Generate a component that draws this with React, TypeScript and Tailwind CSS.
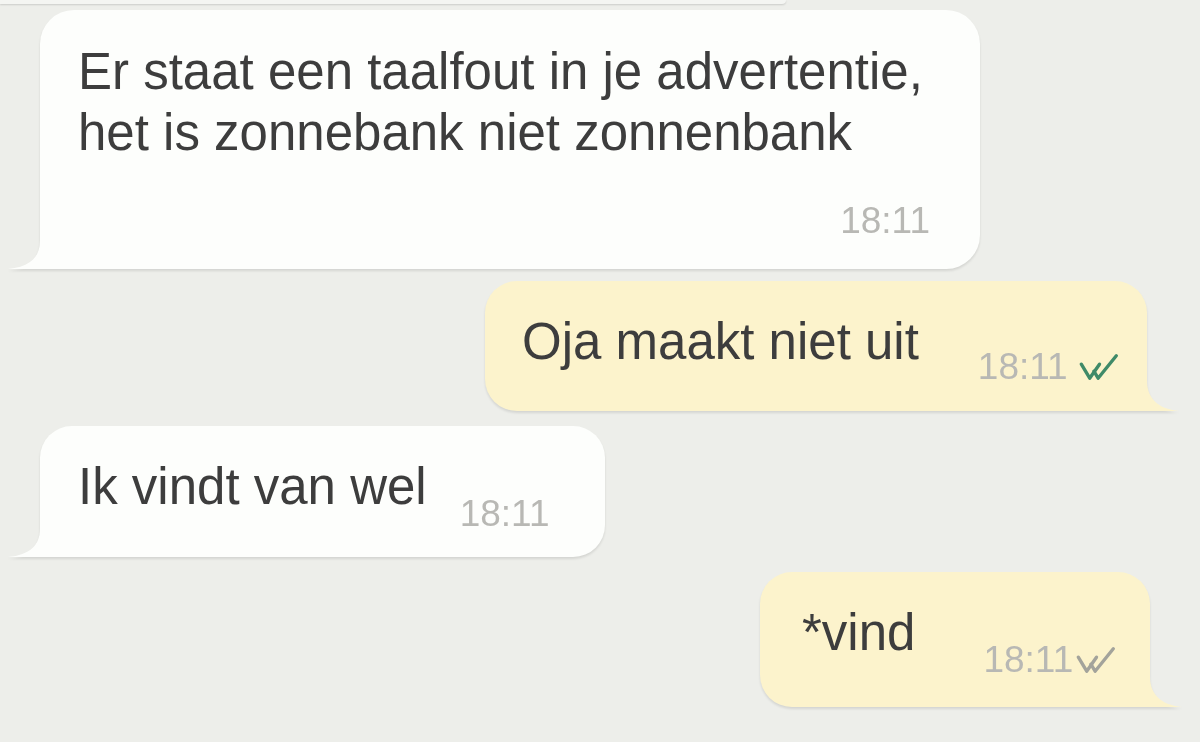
import React from "react";

type Side = "in" | "out";

function Tail({ side, color }: { side: Side; color: string }) {
  if (side === "in") {
    return (
      <svg className="absolute bottom-0 left-[-32px]" width="34" height="28" viewBox="0 0 34 28" aria-hidden="true">
        <path d="M34 0 L32 0 C32 16 22 26 0 28 L34 28 Z" fill={color} />
      </svg>
    );
  }
  return (
    <svg className="absolute bottom-0 right-[-32px]" width="34" height="30" viewBox="0 0 34 30" aria-hidden="true">
      <path d="M0 0 L2 0 C2 16 12 28 34 30 L0 30 Z" fill={color} />
    </svg>
  );
}

function Checks({ color }: { color: string }) {
  return (
    <svg width="43" height="28" viewBox="0 0 30 20" fill="none" stroke={color} strokeWidth="2.4" strokeLinecap="round" strokeLinejoin="round" aria-hidden="true">
      <polyline points="2,8 8,18 15,8" />
      <polyline points="11,13 14,18 27,2" />
    </svg>
  );
}

function Time({ children }: { children: React.ReactNode }) {
  return <span className="text-[37px] leading-[37px] text-[#b8b8b4]">{children}</span>;
}

export default function App() {
  return (
    <div className="flex h-[742px] w-[1200px] flex-col overflow-hidden bg-[#edeeea] font-['Liberation_Sans',Arial,sans-serif] text-[#3d3d3d]">
      {/* edge of the previous message */}
      <div className="h-[4px] w-[786px] rounded-br-[20px] bg-[#f4f5f2] shadow-[0_1px_2px_rgba(0,0,0,0.14)]" />

      {/* incoming, two lines */}
      <div className="ml-[40px] mt-[6px] w-[940px] drop-shadow-[0_2px_1px_rgba(0,0,0,0.1)]">
        <div className="relative rounded-[34px] rounded-bl-none bg-[#fdfefc] pb-[29px] pl-[38px] pr-[50px] pt-[31px]">
          <p className="text-[51px] leading-[61px]">
            Er staat een taalfout in je advertentie,
            <br />
            het is zonnebank niet zonnenbank
          </p>
          <div className="mt-[39px] text-right">
            <Time>18:11</Time>
          </div>
          <Tail side="in" color="#fdfefc" />
        </div>
      </div>

      {/* outgoing */}
      <div className="ml-[485px] mt-[12px] w-[662px] drop-shadow-[0_2px_1px_rgba(0,0,0,0.1)]">
        <div className="relative flex items-start rounded-[32px] rounded-br-none bg-[#fcf3cc] pb-[26px] pl-[37px] pt-[30px]">
          <p className="text-[51px] leading-[61px]">Oja maakt niet uit</p>
          <div className="ml-[59px] mt-[37px] flex items-center gap-[10px]">
            <Time>18:11</Time>
            <Checks color="#3f8a68" />
          </div>
          <Tail side="out" color="#fcf3cc" />
        </div>
      </div>

      {/* incoming */}
      <div className="ml-[40px] mt-[15px] w-[565px] drop-shadow-[0_2px_1px_rgba(0,0,0,0.1)]">
        <div className="relative flex items-start rounded-[32px] rounded-bl-none bg-[#fdfefc] pb-[24px] pl-[38px] pt-[30px]">
          <p className="text-[51px] leading-[61px]">Ik vindt van wel</p>
          <div className="ml-[33px] mt-[39px]">
            <Time>18:11</Time>
          </div>
          <Tail side="in" color="#fdfefc" />
        </div>
      </div>

      {/* outgoing correction */}
      <div className="ml-[760px] mt-[15px] w-[390px] drop-shadow-[0_2px_1px_rgba(0,0,0,0.1)]">
        <div className="relative flex items-start rounded-[32px] rounded-br-none bg-[#fcf3cc] pb-[29px] pl-[42px] pt-[30px]">
          <p className="text-[51px] leading-[61px]">*vind</p>
          <div className="ml-[68px] mt-[39px] flex items-center gap-[2px]">
            <Time>18:11</Time>
            <Checks color="#a3a39b" />
          </div>
          <Tail side="out" color="#fcf3cc" />
        </div>
      </div>
    </div>
  );
}
